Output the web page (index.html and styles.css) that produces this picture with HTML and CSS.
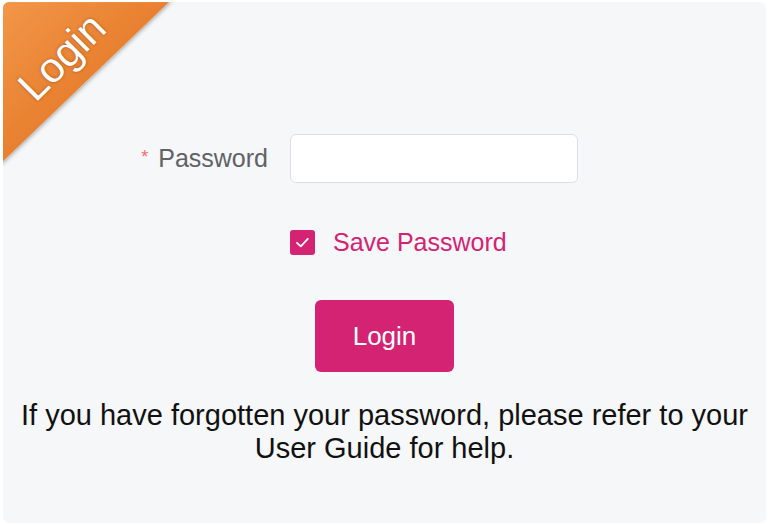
FILE: index.html
```html
<!DOCTYPE html>
<html>
<head>
<meta charset="utf-8">
<link rel="stylesheet" href="styles.css">
</head>
<body>
<div class="card">
  <div class="ribbon">
    <svg class="ribbon-shape" width="190" height="180" viewBox="0 0 190 180">
      <defs>
        <linearGradient id="og" x1="0" y1="0" x2="1" y2="1">
          <stop offset="0" stop-color="#f29749"/>
          <stop offset="0.5" stop-color="#e8802f"/>
          <stop offset="1" stop-color="#d4661a"/>
        </linearGradient>
        <filter id="sh" x="-10%" y="-10%" width="130%" height="130%">
          <feDropShadow dx="1" dy="1" stdDeviation="2" flood-color="#000" flood-opacity="0.35"/>
        </filter>
      </defs>
      <path d="M8,0 L171,0 L0,164 L0,8 Q0,0 8,0 Z" fill="url(#og)" filter="url(#sh)"/>
      <path d="M8,1.5 L168,1.5 M1.5,8 L1.5,160" stroke="#fbb77a" stroke-width="1.5" fill="none" opacity="0.7"/>
    </svg>
    <span class="ribbon-text">Login</span>
  </div>
  <form class="form">
    <div class="row">
      <label class="label"><span class="req">*</span>Password</label>
      <input class="input" type="password">
    </div>
    <div class="check-row">
      <span class="checkbox">
        <svg class="tick" width="25" height="25" viewBox="0 0 25 25"><path d="M7 12.8 L10.8 16.3 L17.8 8.8" stroke="#fff" stroke-width="1.8" fill="none" stroke-linecap="round" stroke-linejoin="round"/></svg>
      </span>
      <span class="check-label">Save Password</span>
    </div>
    <div class="btn-row">
      <button type="button" class="btn">Login</button>
    </div>
    <p class="help">If you have forgotten your password, please refer to your<br>User Guide for help.</p>
  </form>
</div>
</body>
</html>
```
FILE: styles.css
```css
html, body {
  margin: 0;
  padding: 0;
  background: #ffffff;
}
body {
  width: 768px;
  height: 525px;
  overflow: hidden;
  font-family: "Liberation Sans", Arial, sans-serif;
}
.card {
  position: relative;
  margin: 2px 2px 0 3px;
  height: 521px;
  background: #f6f7f9;
  border-radius: 6px;
  overflow: hidden;
}
.ribbon {
  position: absolute;
  left: -3px;
  top: -2px;
  width: 190px;
  height: 180px;
}
.ribbon-shape {
  display: block;
}
.ribbon-text {
  position: absolute;
  left: 62px;
  top: 57px;
  transform: translate(-50%, -50%) rotate(-45deg);
  color: #ffffff;
  font-size: 42px;
  line-height: 1;
  text-shadow: 0 0 3px rgba(120, 50, 0, 0.6);
  white-space: nowrap;
}
.form {
  padding-top: 132px;
}
.row {
  display: flex;
  align-items: center;
}
.label {
  width: 265px;
  text-align: right;
  font-size: 25px;
  color: #606266;
}
.req {
  color: #f56c6c;
  font-size: 18px;
  vertical-align: 4px;
  margin-right: 10px;
}
.input {
  margin-left: 22px;
  width: 288px;
  height: 49px;
  box-sizing: border-box;
  border: 1px solid #dcdfe6;
  border-radius: 6px;
  background: #ffffff;
  outline: none;
}
.check-row {
  display: flex;
  align-items: center;
  margin-top: 45px;
  margin-left: 287px;
}
.checkbox {
  width: 25px;
  height: 25px;
  border-radius: 3px;
  background: #d42372;
  display: flex;
  align-items: center;
  justify-content: center;
}
.tick {
  display: block;
  flex: none;
}
.check-label {
  margin-left: 18px;
  font-size: 25px;
  color: #d42372;
}
.btn-row {
  display: flex;
  justify-content: center;
  margin-top: 43px;
}
.btn {
  width: 139px;
  height: 72px;
  border: none;
  border-radius: 6px;
  background: #d42372;
  color: #ffffff;
  font-family: "Liberation Sans", Arial, sans-serif;
  font-size: 26px;
}
.help {
  margin: 27px 0 0;
  text-align: center;
  font-size: 29px;
  line-height: 33px;
  color: #111111;
}
```
